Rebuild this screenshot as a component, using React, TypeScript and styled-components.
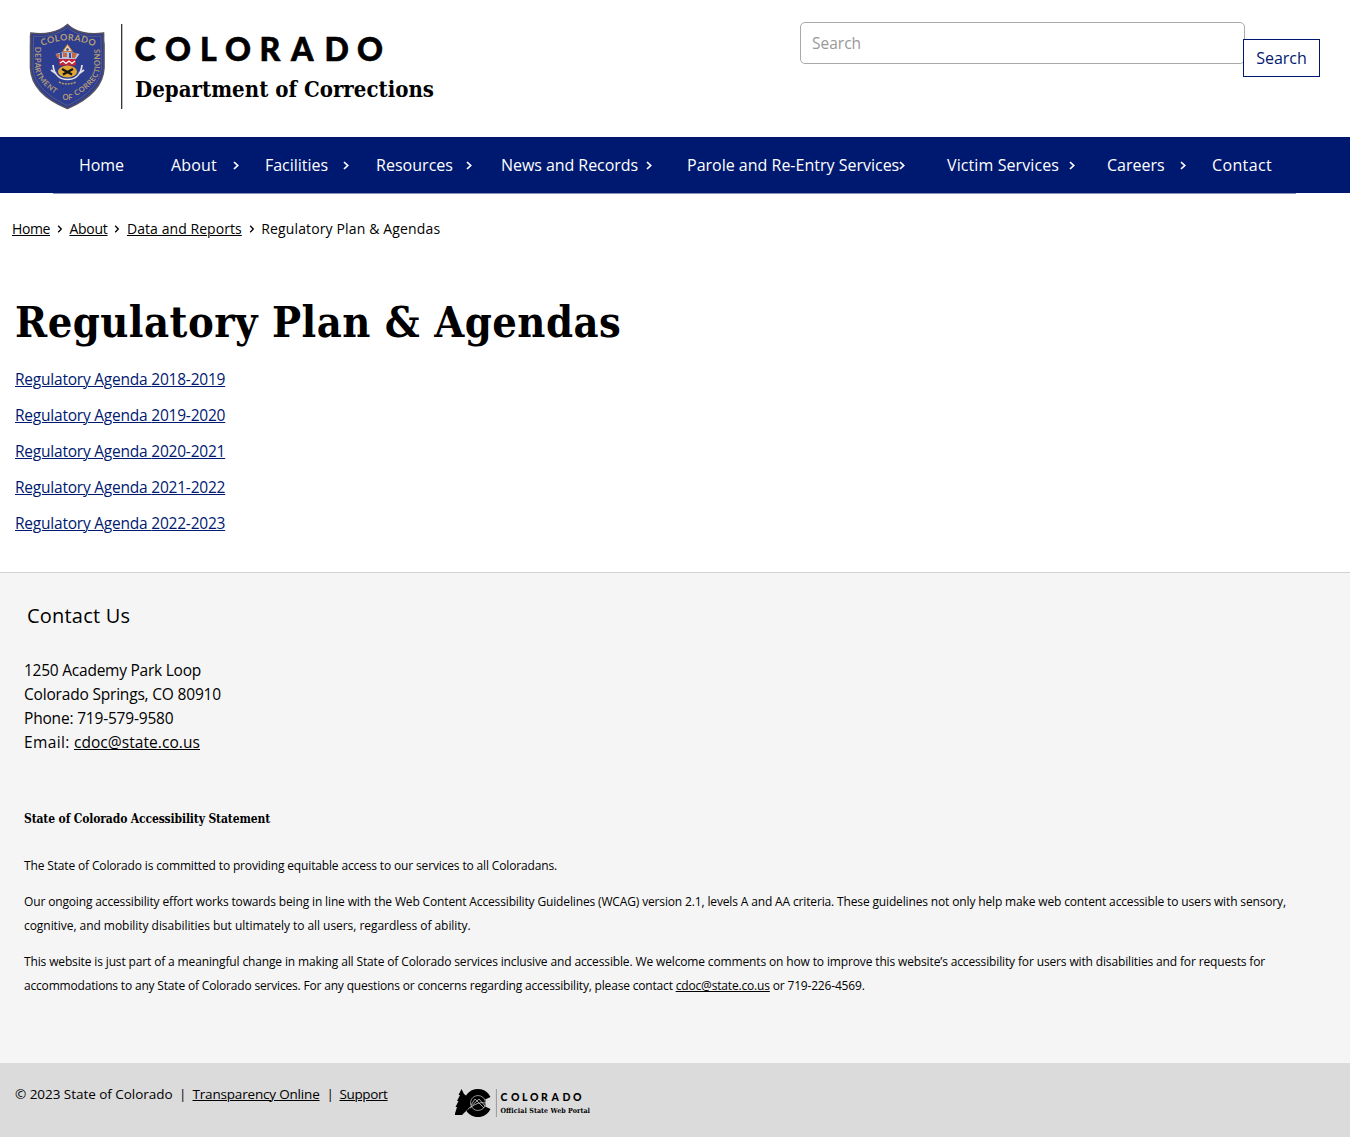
import React from "react";
import styled, { createGlobalStyle } from "styled-components";

const navy = "#001970";
const sans = '"Open Sans", "Noto Sans", sans-serif';
const slab = '"DejaVu Serif Condensed", "DejaVu Serif", serif';

const GlobalStyle = createGlobalStyle`
  * { box-sizing: border-box; }
  body { margin: 0; background: #fff; color: #000; font-family: ${sans}; }
  h1, h2, h3, p, ul { margin: 0; padding: 0; }
`;

const Header = styled.header`
  display: flex;
  justify-content: space-between;
  align-items: flex-start;
  height: 137px;
  padding: 22px 30px 0 28px;
`;

const Brand = styled.a`
  display: flex;
  svg { display: block; }
`;

const SearchForm = styled.form`
  display: flex;
  align-items: flex-start;
`;

const SearchInput = styled.input`
  width: 445px;
  height: 42px;
  padding: 0 12px 0 11px;
  border: 1px solid #aaa;
  border-radius: 5px;
  background: #fff;
  font: 15.5px ${sans};
  &::placeholder { color: #999; opacity: 1; }
`;

const SearchButton = styled.button`
  width: 77px;
  height: 38px;
  margin: 17px 0 0 -2px;
  padding: 0;
  border: 1px solid ${navy};
  background: #fff;
  color: ${navy};
  font: 16px ${sans};
`;

const Nav = styled.nav`
  height: 57px;
  background: linear-gradient(${navy} 56px, #fff 56px);
  padding: 0 54px 0 53px;
`;

const NavList = styled.ul`
  display: grid;
  grid-template-columns: 92px 94px 111px 125px 186px 260px 160px 105px 60px;
  height: 57px;
  padding-left: 26px;
  border-bottom: 1px solid #8c93bd;
  list-style: none;
  background: ${navy};
`;

const NavItem = styled.li<{ $gap: number }>`
  display: flex;
  align-items: center;
  color: #fff;
  white-space: nowrap;
  svg { flex: none; margin: 1px 0 0 ${(p) => p.$gap}px; }
`;

const Tracked = styled.span<{ $track: number }>`
  letter-spacing: ${(p) => p.$track}px;
`;

const Crumbs = styled.nav`
  display: flex;
  align-items: center;
  gap: 6.7px;
  height: 20px;
  margin: 24px 12px 0;
  font-size: 14px;
  white-space: nowrap;
  svg { margin-top: 2px; }
`;

const Link = styled.a<{ $track?: number }>`
  color: inherit;
  letter-spacing: ${(p) => p.$track ?? 0}px;
  text-decoration: underline;
  text-decoration-thickness: 1px;
  text-underline-offset: 1px;
  text-decoration-skip-ink: auto;
`;

const Main = styled.main`
  height: 334px;
  padding: 52px 15px 0;
`;

const Title = styled.h1`
  font: bold 43px/64px ${slab};
  letter-spacing: 0.48px;
`;

const AgendaList = styled.ul`
  padding-top: 13px;
  list-style: none;
  color: ${navy};
  font-size: 15.5px;
  line-height: 24px;
  li { margin-bottom: 12px; }
`;

const Info = styled.section`
  height: 491px;
  padding: 30px 24px 0;
  border-top: 1px solid #d3d3d3;
  background: #f5f5f5;
`;

const InfoTitle = styled.h2`
  padding-left: 3px;
  font-size: 20px;
  font-weight: 400;
  line-height: 26px;
  letter-spacing: 0.2px;
`;

const Address = styled.div`
  padding-top: 29px;
  font-size: 15.5px;
  line-height: 24px;
`;

const Line = styled.span<{ $track: number }>`
  display: block;
  letter-spacing: ${(p) => p.$track}px;
  white-space: nowrap;
`;

const StatementTitle = styled.h3`
  margin: 55px 0 25px;
  font: bold 12px/20px ${slab};
  letter-spacing: -0.136px;
`;

const Statement = styled.p`
  margin-bottom: 12px;
  font-size: 12px;
  line-height: 24px;
`;

const Footer = styled.footer`
  display: flex;
  align-items: flex-start;
  height: 74px;
  padding: 21px 15px 0;
  background: #dbdbdb;
  font-size: 13.5px;
  line-height: 20px;
`;

const FooterText = styled.div`
  display: grid;
  grid-template-columns: 164px 13.5px 134px 13px 115.5px;
  white-space: nowrap;
`;

const Portal = styled.a`
  margin-top: 3px;
  svg { display: block; }
`;

const Chevron = () => (
  <svg width="6" height="9" viewBox="0 0 6 9" fill="none" stroke="currentColor" strokeWidth="1.7">
    <path d="M1 1 L4.7 4.5 L1 8" />
  </svg>
);

const CrumbChevron = () => (
  <svg width="6" height="8" viewBox="0 0 6 8" fill="none" stroke="currentColor" strokeWidth="1.3">
    <path d="M1.2 .8 L4.3 4 L1.2 7.2" />
  </svg>
);

const BrandLogo = () => (
  <svg width="412" height="90" viewBox="28 22 412 90">
    <g transform="translate(29 24)">
      <path
        d="M38.500 .5 C30 8 16 11.500 2 9 C1 13 2 16 1.500 20 L1.500 44 C2.500 64 20 77 38.500 84.500 C56 77 74 64 75 44 L75 20 C74 16 75 13 74.500 9 C60 11.500 46 8 38.500 .5Z"
        fill="#2d3d90"
        stroke="#56525f"
        strokeWidth="1.6"
      />
      <path
        d="M38.500 3.500 C30 10 17 14 4.500 12 L4 44 C5 61 21 74 38.500 81.500 C55 74 71 61 72.500 44 L72 12 C59 14 46 10 38.500 3.500Z"
        fill="none"
        stroke="#6a6580"
        strokeWidth=".7"
      />
      <path id="sealTop" d="M13 22 Q38.500 11 64 22" fill="none" />
      <path id="sealLeft" d="M5.500 23 L5.500 43 C7 55 17 65 30 72" fill="none" />
      <path id="sealBase" d="M33.500 76 H44" fill="none" />
      <path id="sealRight" d="M47 72 C60 65 70 55 71 43 L71 23" fill="none" />
      <g fill="#b39c77" fontFamily="Lato, sans-serif" fontWeight="700">
        <text fontSize="9">
          <textPath href="#sealTop" textLength="54">COLORADO</textPath>
        </text>
        <g fontSize="7.500">
          <text>
            <textPath href="#sealLeft" textLength="55">DEPARTMENT</textPath>
          </text>
          <text>
            <textPath href="#sealBase" textLength="10">OF</textPath>
          </text>
          <text>
            <textPath href="#sealRight" textLength="57">CORRECTIONS</textPath>
          </text>
        </g>
      </g>
      <path d="M38.500 20.500 L33.500 27.500 H43.500Z" fill="#e9d9a8" stroke="#c87634" strokeWidth="1" />
      <circle cx="38.500" cy="25.500" r="1.300" fill="#304490" />
      <path d="M26.500 30 Q38.500 26 50.500 30 L47 35 H30Z" fill="#b9c1dc" />
      <path d="M27 30 h4 l-1 4 h-2Z M34 29 h4 v4 h-4Z M43 29 h5 l-2 5 h-3Z" fill="#c7683c" />
      <path d="M31 29 h2 v5 h-2Z M40 29 h2 v5 h-2Z" fill="#3b4c96" />
      <path d="M30 35 H47 V41.500 H30Z" fill="#bf2637" />
      <path d="M31 39 L34 37 L37 39.500 L40 37 L43 39.500 L46 37" fill="none" stroke="#fff" strokeWidth="1.300" />
      <ellipse cx="38.500" cy="47.500" rx="9.500" ry="6" fill="#dfa735" />
      <path d="M33 45 L43 50.500 M44 45 L34 50.500" stroke="#151515" strokeWidth="2.200" />
      <path d="M24 41 C25 51 31 55.500 38.500 55.500 C46 55.500 52 51 53 41" fill="none" stroke="#e6e6e6" strokeWidth="1.700" />
      <path d="M22 46 L27 49.500 M55 46 L50 49.500" stroke="#dfe0e6" strokeWidth="2" />
      <path d="M30 58 Q38 62 47 58" fill="none" stroke="#b49c6d" strokeWidth="1.500" strokeDasharray="2 1" />
    </g>
    <path d="M121.700 24 V109" stroke="#222" strokeWidth="1.200" />
    <text
      x="134.500 165 200 225 259.500 291 324.500 357"
      y="60.500"
      fontFamily="Lato, sans-serif"
      fontWeight="900"
      fontSize="32"
      stroke="#000"
      strokeWidth=".6"
    >
      COLORADO
    </text>
    <text x="135" y="97" fontFamily="DejaVu Serif Condensed, DejaVu Serif, serif" fontWeight="bold" fontSize="22" textLength="299">
      Department of Corrections
    </text>
  </svg>
);

const PortalLogo = () => (
  <svg width="138" height="32" viewBox="455 1087 138 32">
    <path
      d="M490.500 1097 A14 14 0 1 0 490.500 1109 L485 1106.500 A7 7 0 1 1 485 1099.500Z"
      fill="#000"
    />
    <circle cx="478" cy="1103" r="8" fill="#000" />
    <circle cx="478" cy="1103" r="7.500" fill="none" stroke="#c9c9c9" strokeWidth=".7" />
    <path d="M465 1112 L479 1099 L485 1106 M471 1105 L475 1099 L484 1108 M470 1108 Q478 1101 486 1103" fill="none" stroke="#c9c9c9" strokeWidth=".8" />
    <path
      d="M461.500 1089 L458.500 1095 H460 L457 1101 H458.500 L455.500 1107 H457 L454.500 1115 H462 L468 1109 V1097 L464 1094Z"
      fill="#000"
    />
    <path d="M496.400 1089 V1117" stroke="#888" strokeWidth=".8" />
    <text
      x="500.500 511 522 530 541 551.500 562.500 573"
      y="1101"
      fontFamily="Lato, sans-serif"
      fontWeight="900"
      fontSize="10.500"
    >
      COLORADO
    </text>
    <text x="500.500" y="1113" fontFamily="DejaVu Serif Condensed, DejaVu Serif, serif" fontWeight="bold" fontSize="7" textLength="89.500">
      Official State Web Portal
    </text>
  </svg>
);

const navItems = [
  { label: "Home", track: -0.05, gap: 0 },
  { label: "About", track: 0.15, gap: 16.5, more: true },
  { label: "Facilities", track: -0.03, gap: 15, more: true },
  { label: "Resources", track: 0.03, gap: 13, more: true },
  { label: "News and Records", track: -0.06, gap: 7.5, more: true },
  { label: "Parole and Re-Entry Services", track: 0, gap: -0.5, more: true },
  { label: "Victim Services", track: 0.1, gap: 10, more: true },
  { label: "Careers", track: 0, gap: 15, more: true },
  { label: "Contact", track: 0.36, gap: 0 },
];

const years = ["2018-2019", "2019-2020", "2020-2021", "2021-2022", "2022-2023"];

export default function App() {
  return (
    <>
      <GlobalStyle />
      <Header>
        <Brand>
          <BrandLogo />
        </Brand>
        <SearchForm>
          <SearchInput placeholder="Search" />
          <SearchButton type="button">Search</SearchButton>
        </SearchForm>
      </Header>
      <Nav>
        <NavList>
          {navItems.map((n) => (
            <NavItem key={n.label} $gap={n.gap}>
              <Tracked $track={n.track}>{n.label}</Tracked>
              {n.more && <Chevron />}
            </NavItem>
          ))}
        </NavList>
      </Nav>
      <Crumbs>
        <Link $track={-0.39}>Home</Link>
        <CrumbChevron />
        <Link $track={-0.25}>About</Link>
        <CrumbChevron />
        <Link $track={0.07}>Data and Reports</Link>
        <CrumbChevron />
        <Tracked $track={0.14}>Regulatory Plan &amp; Agendas</Tracked>
      </Crumbs>
      <Main>
        <Title>Regulatory Plan &amp; Agendas</Title>
        <AgendaList>
          {years.map((y) => (
            <li key={y}>
              <Link $track={-0.22}>Regulatory Agenda {y}</Link>
            </li>
          ))}
        </AgendaList>
      </Main>
      <Info>
        <InfoTitle>Contact Us</InfoTitle>
        <Address>
          <Line $track={-0.24}>1250 Academy Park Loop</Line>
          <Line $track={-0.19}>Colorado Springs, CO 80910</Line>
          <Line $track={-0.19}>Phone: 719-579-9580</Line>
          <Line $track={0.35}>
            Email: <Link $track={0.06}>cdoc@state.co.us</Link>
          </Line>
        </Address>
        <StatementTitle>State of Colorado Accessibility Statement</StatementTitle>
        <Statement>
          <Line $track={-0.149}>
            The State of Colorado is committed to providing equitable access to our services to all Coloradans.
          </Line>
        </Statement>
        <Statement>
          <Line $track={-0.146}>
            Our ongoing accessibility effort works towards being in line with the Web Content Accessibility Guidelines
            (WCAG) version 2.1, levels A and AA criteria. These guidelines not only help make web content accessible to
            users with sensory,
          </Line>
          <Line $track={-0.05}>
            cognitive, and mobility disabilities but ultimately to all users, regardless of ability.
          </Line>
        </Statement>
        <Statement>
          <Line $track={-0.139}>
            This website is just part of a meaningful change in making all State of Colorado services inclusive and
            accessible. We welcome comments on how to improve this website’s accessibility for users with disabilities
            and for requests for
          </Line>
          <Line $track={-0.18}>
            accommodations to any State of Colorado services. For any questions or concerns regarding accessibility,
            please contact <Link $track={-0.17}>cdoc@state.co.us</Link> or 719-226-4569.
          </Line>
        </Statement>
      </Info>
      <Footer>
        <FooterText>
          <Tracked $track={-0.04}>© 2023 State of Colorado</Tracked>
          <span>|</span>
          <Link $track={-0.18}>Transparency Online</Link>
          <span>|</span>
          <Link $track={-0.37}>Support</Link>
        </FooterText>
        <Portal>
          <PortalLogo />
        </Portal>
      </Footer>
    </>
  );
}
